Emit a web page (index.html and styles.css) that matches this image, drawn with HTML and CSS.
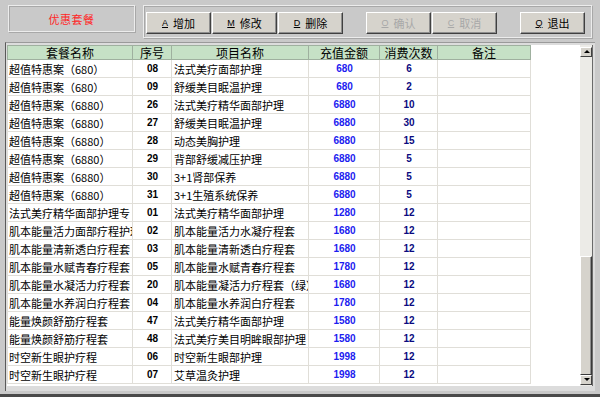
FILE: index.html
```html
<!DOCTYPE html>
<html lang="zh">
<head>
  <meta charset="UTF-8">
  <title>优惠套餐</title>
  <link rel="stylesheet" href="styles.css">
</head>
<body>
  <div class="window">
    <div class="top">
      <div class="title-box">优惠套餐</div>
      <div class="toolbar">
        <div class="btn-group">
          <button class="btn"><u>A</u> 增加</button>
          <button class="btn"><u>M</u> 修改</button>
          <button class="btn"><u>D</u> 删除</button>
        </div>
        <div class="btn-group">
          <button class="btn disabled"><u>O</u> 确认</button>
          <button class="btn disabled"><u>C</u> 取消</button>
        </div>
        <button class="btn"><u>Q</u> 退出</button>
      </div>
    </div>

    <div class="grid">
      <div class="grid-body">
        <table class="data">
          <colgroup>
            <col style="width:125px">
            <col style="width:39px">
            <col style="width:137px">
            <col style="width:71px">
            <col style="width:58px">
            <col style="width:93px">
          </colgroup>
          <thead>
            <tr>
              <th>套餐名称</th>
              <th>序号</th>
              <th>项目名称</th>
              <th>充值金额</th>
              <th>消费次数</th>
              <th>备注</th>
            </tr>
          </thead>
          <tbody>
            <tr><td>超值特惠案（680）</td><td class="no">08</td><td class="item">法式美疗面部护理</td><td class="amt">680</td><td class="cnt">6</td><td></td></tr>
            <tr><td>超值特惠案（680）</td><td class="no">09</td><td class="item">舒缓美目眠温护理</td><td class="amt">680</td><td class="cnt">2</td><td></td></tr>
            <tr><td>超值特惠案（6880）</td><td class="no">26</td><td class="item">法式美疗精华面部护理</td><td class="amt">6880</td><td class="cnt">10</td><td></td></tr>
            <tr><td>超值特惠案（6880）</td><td class="no">27</td><td class="item">舒缓美目眠温护理</td><td class="amt">6880</td><td class="cnt">30</td><td></td></tr>
            <tr><td>超值特惠案（6880）</td><td class="no">28</td><td class="item">动态美胸护理</td><td class="amt">6880</td><td class="cnt">15</td><td></td></tr>
            <tr><td>超值特惠案（6880）</td><td class="no">29</td><td class="item">背部舒缓减压护理</td><td class="amt">6880</td><td class="cnt">5</td><td></td></tr>
            <tr><td>超值特惠案（6880）</td><td class="no">30</td><td class="item">3+1肾部保养</td><td class="amt">6880</td><td class="cnt">5</td><td></td></tr>
            <tr><td>超值特惠案（6880）</td><td class="no">31</td><td class="item">3+1生殖系统保养</td><td class="amt">6880</td><td class="cnt">5</td><td></td></tr>
            <tr><td>法式美疗精华面部护理专</td><td class="no">01</td><td class="item">法式美疗精华面部护理</td><td class="amt">1280</td><td class="cnt">12</td><td></td></tr>
            <tr><td>肌本能量活力面部疗程护理</td><td class="no">02</td><td class="item">肌本能量活力水凝疗程套</td><td class="amt">1680</td><td class="cnt">12</td><td></td></tr>
            <tr><td>肌本能量清新透白疗程套</td><td class="no">03</td><td class="item">肌本能量清新透白疗程套</td><td class="amt">1680</td><td class="cnt">12</td><td></td></tr>
            <tr><td>肌本能量水赋青春疗程套</td><td class="no">05</td><td class="item">肌本能量水赋青春疗程套</td><td class="amt">1780</td><td class="cnt">12</td><td></td></tr>
            <tr><td>肌本能量水凝活力疗程套</td><td class="no">20</td><td class="item">肌本能量凝活力疗程套（绿）</td><td class="amt">1680</td><td class="cnt">12</td><td></td></tr>
            <tr><td>肌本能量水养润白疗程套</td><td class="no">04</td><td class="item">肌本能量水养润白疗程套</td><td class="amt">1780</td><td class="cnt">12</td><td></td></tr>
            <tr><td>能量焕颜舒筋疗程套</td><td class="no">47</td><td class="item">法式美疗精华面部护理</td><td class="amt">1580</td><td class="cnt">12</td><td></td></tr>
            <tr><td>能量焕颜舒筋疗程套</td><td class="no">48</td><td class="item">法式美疗美目明眸眼部护理</td><td class="amt">1580</td><td class="cnt">12</td><td></td></tr>
            <tr><td>时空新生眼护疗程</td><td class="no">06</td><td class="item">时空新生眼部护理</td><td class="amt">1998</td><td class="cnt">12</td><td></td></tr>
            <tr><td>时空新生眼护疗程</td><td class="no">07</td><td class="item">艾草温灸护理</td><td class="amt">1998</td><td class="cnt">12</td><td></td></tr>
          </tbody>
        </table>
      </div>
      <div class="scrollbar">
        <div class="arrow up"></div>
        <div class="track">
          <div class="thumb"></div>
        </div>
        <div class="arrow down"></div>
      </div>
    </div>
  </div>
</body>
</html>
```

FILE: styles.css
```css
/* Reset */
* {
  margin: 0;
  padding: 0;
  box-sizing: border-box;
}

body {
  background-color: #c9c9c9;
  font-family: "Noto Sans CJK SC", "Liberation Sans", sans-serif;
  color: #000;
}

/* Window frame */
.window {
  width: 600px;
  height: 397px;
  background-color: #c9c9c9;
  border-bottom: 3px solid #4a4a4a;
  display: flex;
  flex-direction: column;
}

/* Top area: title + toolbar */
.top {
  display: flex;
  gap: 8px;
  padding: 5px 8px 0 8px;
  height: 42px;
}

.title-box {
  width: 127px;
  height: 27px;
  border: 1px solid #ececec;
  box-shadow: inset 1px 1px 0 #a8a8a8, 1px 1px 0 #a8a8a8;
  display: flex;
  align-items: center;
  justify-content: center;
  color: #ff2626;
  font-size: 11px;
  letter-spacing: 0.5px;
}

.toolbar {
  flex: 1;
  height: 33px;
  border: 1px solid #ececec;
  box-shadow: inset 1px 1px 0 #a8a8a8, 1px 1px 0 #a8a8a8;
  display: flex;
  align-items: flex-start;
  padding: 6px 0 0 2px;
  gap: 23px;
}

.btn-group {
  display: flex;
  gap: 1px;
}

.btn {
  width: 65px;
  height: 22px;
  background-color: #d6d3cc;
  border: 1px solid;
  border-color: #ffffff #404040 #404040 #ffffff;
  box-shadow: inset -1px -1px 0 #8e8e8e;
  font-family: "Noto Sans CJK SC", sans-serif;
  font-size: 11px;
  color: #000;
  display: flex;
  align-items: center;
  justify-content: center;
  gap: 5px;
}

.btn u {
  font-family: "Liberation Sans", sans-serif;
  font-size: 9px;
}

.btn.disabled {
  color: #a8a8a8;
}

/* Grid */
.grid {
  flex: 1;
  margin: 0 5px 3px 5px;
  border-left: 1px solid #5a5a5a;
  border-top: 1px solid #9a9a9a;
  padding: 2px 2px 0 1px;
  display: flex;
  background-color: #dcdcdc;
}

.grid-body {
  width: 574px;
  height: 341px;
  background-color: #fff;
  overflow: hidden;
}

.data {
  table-layout: fixed;
  border-collapse: collapse;
  width: 523px;
}

.data th {
  height: 14px;
  background-color: #c6e1c6;
  border: 1px solid #9fb09f;
  font-weight: normal;
  font-size: 12px;
  line-height: 12px;
  text-align: center;
}

.data td {
  height: 18px;
  border: 1px solid #e0ded8;
  font-size: 11px;
  line-height: 16px;
  white-space: nowrap;
  overflow: hidden;
  padding-left: 1px;
}

.data td.item {
  padding-left: 2px;
}

.data td.no,
.data td.amt,
.data td.cnt {
  text-align: center;
  font-family: "Liberation Sans", sans-serif;
  font-weight: bold;
  font-size: 10px;
}

.data td.amt {
  color: #1c1cf0;
}

.data td.cnt {
  color: #0a0a80;
}

/* Scrollbar */
.scrollbar {
  width: 13px;
  height: 341px;
  display: flex;
  flex-direction: column;
  background-color: #ecebe7;
  border-right: 1px solid #6a6a6a;
}

.arrow {
  height: 10px;
  margin-top: 2px;
  background-color: #d6d3cc;
  border: 1px solid;
  border-color: #ffffff #404040 #404040 #ffffff;
  position: relative;
}

.arrow::after {
  content: "";
  position: absolute;
  left: 3px;
  top: 2px;
  border-left: 3px solid transparent;
  border-right: 3px solid transparent;
}

.arrow.up::after {
  border-bottom: 3px solid #000;
}

.arrow.down {
  margin-top: 0;
  margin-bottom: 1px;
}

.arrow.down::after {
  border-top: 3px solid #000;
}

.track {
  flex: 1;
  display: flex;
  flex-direction: column;
  justify-content: flex-end;
}

.thumb {
  height: 119px;
  background-color: #d6d3cc;
  border: 1px solid;
  border-color: #ffffff #3a3a3a #3a3a3a #ffffff;
  box-shadow: inset -1px 0 0 #8e8e8e;
}
```
